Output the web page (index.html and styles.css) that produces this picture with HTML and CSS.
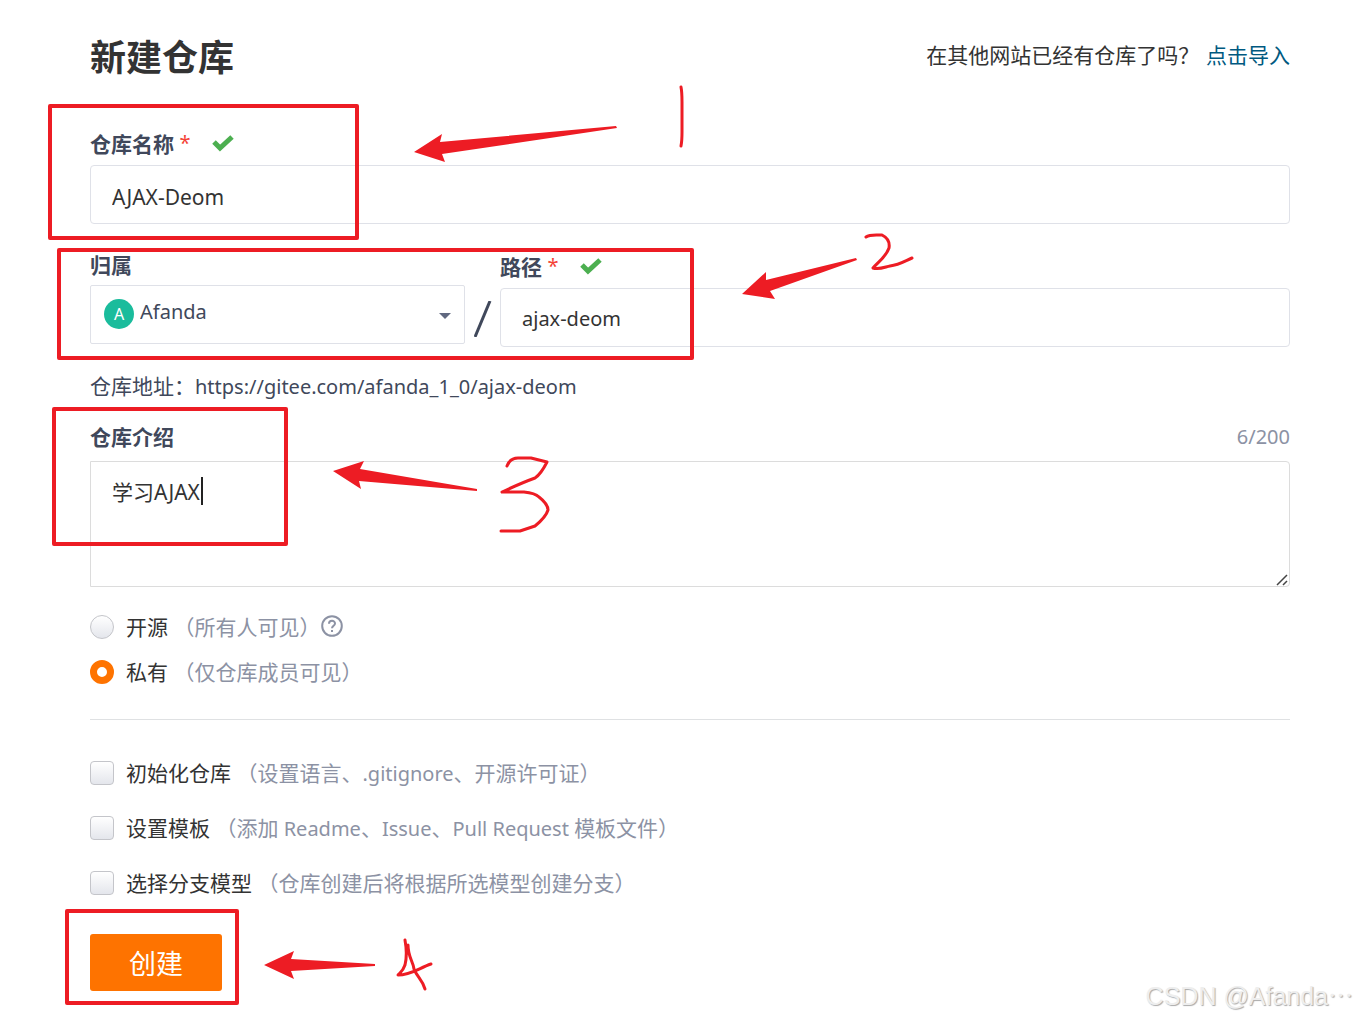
FILE: index.html
```html
<!DOCTYPE html>
<html lang="zh-CN">
<head>
    <meta charset="UTF-8">
    <meta name="viewport" content="width=device-width, initial-scale=1.0">
    <title>新建仓库</title>
    <link rel="stylesheet" href="styles.css">
</head>
<body>

<main class="page">
    <header class="page-header">
        <h1>新建仓库</h1>
        <p class="import-tip">在其他网站已经有仓库了吗？ <a href="#import">点击导入</a></p>
    </header>

    <form class="repo-form">
        <!-- 仓库名称 -->
        <div class="field">
            <div class="label-row">
                <label for="repoName">仓库名称 <span class="required">*</span></label>
                <svg class="check" viewBox="0 0 22 18"><path d="M2 8l6 6L20 3" /></svg>
            </div>
            <input class="text-input name-input" type="text" id="repoName" value="AJAX-Deom">
        </div>

        <!-- 归属 / 路径 -->
        <div class="path-row">
            <div class="field">
                <div class="label-row owner-label"><label for="owner">归属</label></div>
                <div class="select-wrapper">
                    <select id="owner">
                        <option>Afanda</option>
                    </select>
                    <span class="avatar">A</span>
                    <svg class="arrow" viewBox="0 0 12 6"><path d="M0 0h12L6 6z" /></svg>
                </div>
            </div>
            <svg class="slash" viewBox="0 0 18 36"><path d="M1 36L16 0" /></svg>
            <div class="field">
                <div class="label-row">
                    <label for="repoPath">路径 <span class="required">*</span></label>
                    <svg class="check" viewBox="0 0 22 18"><path d="M2 8l6 6L20 3" /></svg>
                </div>
                <input class="text-input" type="text" id="repoPath" value="ajax-deom">
            </div>
        </div>
        <p class="address">仓库地址：<span class="latin">https://gitee.com/afanda_1_0/ajax-deom</span></p>

        <!-- 仓库介绍 -->
        <div class="intro">
            <div class="label-row intro-label">
                <label for="intro">仓库介绍</label>
                <span class="counter">6/200</span>
            </div>
            <div class="textarea-wrapper">
                <textarea id="intro">学习AJAX</textarea>
                <span class="caret"></span>
                <svg class="grip" viewBox="0 0 12 12"><path d="M1 11L11 1M7 11l4-4" /></svg>
            </div>
        </div>

        <!-- 公开设置 -->
        <div class="visibility">
            <div class="option">
                <input type="radio" name="visibility" id="public">
                <label for="public">开源 <span class="hint">（所有人可见）</span></label>
                <svg class="help" viewBox="0 0 22 22">
                    <circle cx="11" cy="11" r="9.8" />
                    <path d="M8 8.8c0-4 6-3.900 6-.3 0 2.200-3 2.200-3 4.700M11 15v2" />
                </svg>
            </div>
            <div class="option">
                <input type="radio" name="visibility" id="private" checked>
                <label for="private">私有 <span class="hint">（仅仓库成员可见）</span></label>
            </div>
        </div>

        <div class="settings">
            <div class="option">
                <input type="checkbox" id="init">
                <label for="init">初始化仓库 <span class="hint">（设置语言、<span class="latin">.gitignore</span>、开源许可证）</span></label>
            </div>
            <div class="option">
                <input type="checkbox" id="template">
                <label for="template">设置模板 <span class="hint">（添加<span class="latin"> Readme</span>、<span class="latin">Issue</span>、<span class="latin">Pull Request </span>模板文件）</span></label>
            </div>
            <div class="option">
                <input type="checkbox" id="branch">
                <label for="branch">选择分支模型 <span class="hint">（仓库创建后将根据所选模型创建分支）</span></label>
            </div>
        </div>

        <button class="submit" type="button">创建</button>
    </form>
</main>

<!-- 步骤标注 -->
<svg class="marks" viewBox="0 0 1358 1020">
    <g class="mark-line">
        <rect x="50" y="106" width="307" height="132" />
        <rect x="59" y="250" width="633" height="108" />
        <rect x="54" y="409" width="232" height="135" />
        <rect x="67" y="911" width="170" height="92" />
    </g>
    <g class="mark-arrow">
        <path d="M414 152L442 134L440 142L616 126L617 128L442 154L445 162z" />
        <path d="M742 294L766 272L766 280L856 258L857 260L770 291L775 299z" />
        <path d="M333 471L364 461L360 469L477 489L477 491L359 481L361 489z" />
        <path d="M264 965L294 951L291 959L375 964L375 966L291 971L294 979z" />
    </g>
    <g class="mark-pen">
        <path d="M681 87Q682 92 682 102V132Q682 141 681 146" />
        <path d="M866 237C870 234 876 235 882 235C888 238 890 242 889 248C886 257 878 262 873 268C879 270 885 267 890 266C899 265 905 261 912 258" />
        <path d="M507 466Q510 458 518 458H531L547 462Q541 474 535 478C524 482 517 485 502 492L524 492Q535 493 539 497Q548 504 548 510Q546 517 535 526L520 531H501" />
        <path d="M405 940C407 951 406 961 405 965C403 971 401 972 398 975C411 975 419 968 431 964M408 945C408 957 413 961 414 969C417 977 422 979 425 989" />
    </g>
</svg>
<div class="watermark">CSDN @Afanda⋯</div>

</body>
</html>
```

FILE: styles.css
```css
* {
    box-sizing: border-box;
}
body {
    position: relative;
    margin: 0;
    background-color: #fff;
    color: #333;
    font-family: "Noto Sans", "Noto Sans CJK SC", sans-serif;
    font-size: 21px;
    line-height: 32px;
}
h1, p {
    margin: 0;
}
.page {
    padding: 30px 68px 28px 90px;
}
.page-header {
    display: flex;
    justify-content: space-between;
    align-items: flex-end;
    height: 54px;
}
h1 {
    font-size: 36px;
    line-height: 52px;
}
.import-tip {
    padding-bottom: 14px;
    font-family: "Noto Sans CJK SC", sans-serif;
}
a {
    margin-left: 2px;
    color: #005980;
    text-decoration: none;
}
.repo-form {
    padding-top: 44px;
}
.label-row {
    display: flex;
    align-items: center;
    height: 37px;
    padding-bottom: 6px;
    color: #40485b;
    font-weight: bold;
}
.required {
    color: #f44336;
    font-weight: normal;
    font-size: 20px;
    line-height: 20px;
    vertical-align: 2px;
}
.check {
    width: 22px;
    height: 18px;
    margin: 0 0 2px 21px;
    fill: none;
    stroke: #4caf50;
    stroke-width: 5;
}
.text-input, select, textarea {
    display: block;
    width: 100%;
    margin: 0;
    background-color: #fff;
    color: #333;
    font-family: inherit;
    font-size: 20px;
    border: 1px solid #dfe1e8;
    border-radius: 4px;
    outline: none;
}
.text-input {
    height: 59px;
    padding: 2px 21px 0;
}
.name-input {
    padding-top: 4px;
    font-size: 21px;
}

/* 归属 / 路径 */
.path-row {
    display: grid;
    grid-template-columns: 375px 35px 1fr;
    padding-top: 27px;
}
.owner-label {
    height: 34px;
}
.select-wrapper {
    position: relative;
}
select {
    height: 59px;
    padding: 0 40px 6px 49px;
    appearance: none;
    color: #40485b;
    border-radius: 2px;
}
.avatar {
    position: absolute;
    top: 14px;
    left: 14px;
    width: 30px;
    height: 30px;
    border-radius: 50%;
    background-color: #1abc9c;
    color: #fff;
    font-size: 16px;
    line-height: 30px;
    text-align: center;
}
.arrow {
    position: absolute;
    top: 28px;
    right: 14px;
    width: 12px;
    height: 6px;
    fill: #606880;
}
.slash {
    align-self: end;
    justify-self: center;
    width: 18px;
    height: 36px;
    margin-bottom: 10px;
    fill: none;
    stroke: #40485b;
    stroke-width: 3;
}
.address {
    padding-top: 23px;
    color: #40485b;
}
.latin {
    font-size: 20px;
}

/* 仓库介绍 */
.intro {
    padding-top: 18px;
}
.intro-label {
    justify-content: space-between;
    height: 40px;
    padding-bottom: 8px;
}
.counter {
    color: #8c92a4;
    font-size: 20px;
    font-weight: normal;
}
.textarea-wrapper {
    position: relative;
}
textarea {
    height: 126px;
    padding: 14px 21px;
    font-size: 21px;
    line-height: 32px;
    border-color: #dcdcdc;
    border-radius: 0 4px 4px 0;
    resize: none;
}
.caret {
    position: absolute;
    top: 16px;
    left: 111px;
    width: 2px;
    height: 28px;
    background-color: #222;
}
.grip {
    position: absolute;
    right: 2px;
    bottom: 1px;
    width: 12px;
    height: 12px;
    fill: none;
    stroke: #444;
    stroke-width: 1.5;
}

/* 选项 */
.option {
    display: flex;
    align-items: center;
    height: 45px;
}
.option label {
    padding: 1px 0 0 12px;
}
.option input {
    appearance: none;
    width: 24px;
    height: 24px;
    margin: 0;
    border: 1px solid #c4c5ca;
    border-radius: 4px;
    background-image: linear-gradient(#fff, #e4e6ec);
}
.option input[type="radio"] {
    border-radius: 50%;
}
.option input[type="radio"]:checked {
    border: 7px solid #fe7300;
    background: #fff;
}
.hint {
    color: #8c92a4;
}
.help {
    width: 22px;
    height: 22px;
    margin: 0 0 2px 1px;
    fill: none;
    stroke: #8c92a4;
    stroke-width: 2;
}
.visibility {
    padding: 17px 0 25px;
    border-bottom: 1px solid #dfe1e3;
}
.settings {
    padding-top: 25px;
}
.settings .option {
    height: 55px;
}
.submit {
    display: block;
    width: 132px;
    height: 57px;
    margin-top: 24px;
    padding: 0;
    border: none;
    border-radius: 3px;
    background-color: #fe7300;
    color: #fff;
    font-family: inherit;
    font-size: 27px;
    cursor: pointer;
}

/* 标注 */
.marks {
    position: absolute;
    top: 0;
    left: 0;
    width: 1358px;
    height: 1020px;
    pointer-events: none;
}
.mark-line, .mark-pen {
    fill: none;
    stroke: #ed1c24;
    stroke-width: 4;
    stroke-linejoin: round;
}
.mark-pen {
    stroke-width: 3;
    stroke-linecap: round;
}
.mark-arrow {
    fill: #ed1c24;
}
.watermark {
    position: absolute;
    right: 5px;
    bottom: 7px;
    color: #eee;
    font-family: "Liberation Sans", "Noto Sans CJK SC", sans-serif;
    font-size: 25px;
    text-shadow: 1px 1px 1px #aaa;
}
```
